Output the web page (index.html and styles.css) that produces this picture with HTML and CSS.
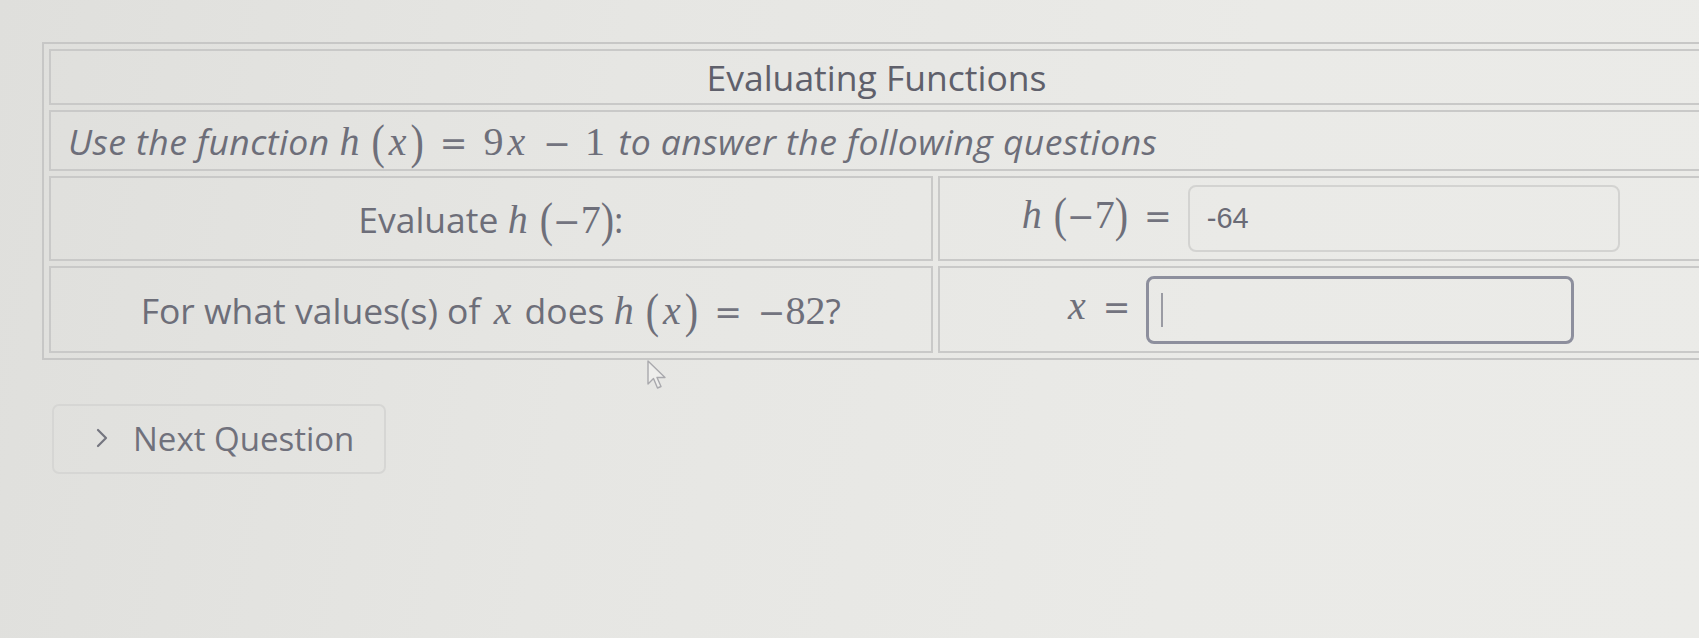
FILE: index.html
```html
<!DOCTYPE html>
<html lang="en">
<head>
<meta charset="utf-8">
<title>Evaluating Functions</title>
<link rel="stylesheet" href="styles.css">
</head>
<body>
<div class="page">
  <table class="qtable">
    <colgroup><col class="col-q"><col class="col-a"></colgroup>
    <tr>
      <th colspan="2" class="title">Evaluating Functions</th>
    </tr>
    <tr>
      <td colspan="2" class="intro">Use the function <span class="math"><i class="fn">h</i><span class="paren">(</span><i class="var">x</i><span class="paren">)</span><span class="op rel">=</span>9<i class="var">x</i><span class="op bin">−</span>1</span> to answer the following questions</td>
    </tr>
    <tr>
      <td class="q">Evaluate <span class="math"><i class="fn">h</i><span class="paren">(</span><span class="op">−</span>7<span class="paren">)</span></span>:</td>
      <td class="a"><span class="math"><i class="fn">h</i><span class="paren">(</span><span class="op">−</span>7<span class="paren">)</span><span class="op rel">=</span></span><span class="field filled">-64</span></td>
    </tr>
    <tr>
      <td class="q">For what values(s) of <span class="math"><i class="var">x</i></span> does <span class="math"><i class="fn">h</i><span class="paren">(</span><i class="var">x</i><span class="paren">)</span><span class="op rel">=</span><span class="op">−</span>82</span>?</td>
      <td class="a"><span class="math"><i class="var solo">x</i><span class="op rel">=</span></span><span class="field focused"><span class="caret"></span></span></td>
    </tr>
  </table>
  <button class="next" type="button"><svg class="chev" width="12" height="20" viewBox="0 0 12 20"><path d="M2 2 L10 10 L2 18" fill="none" stroke="#74757f" stroke-width="2.2" stroke-linecap="round" stroke-linejoin="round"/></svg>Next Question</button>
  <svg class="pointer" width="22" height="32" viewBox="0 0 22 32"><path d="M2 2 L2 25 L7.5 19.5 L11.5 29 L15 27.5 L11 18.5 L19 18.5 Z" fill="#eeeeec" stroke="#a9a9ad" stroke-width="1.4" stroke-linejoin="round"/></svg>
</div>
</body>
</html>
```

FILE: styles.css
```css
html, body {
  margin: 0;
  padding: 0;
  overflow: hidden;
}
body {
  width: 1699px;
  height: 638px;
  background: linear-gradient(100deg, #dfdfdc 0%, #e6e6e3 35%, #eaeae7 70%, #ebebe8 100%);
  font-family: "Open Sans", "Noto Sans", sans-serif;
  color: #6d6e79;
}
.page {
  position: relative;
  padding: 42px 0 0 42px;
}
.qtable {
  table-layout: fixed;
  width: 1669px;
  border-collapse: separate;
  border-spacing: 5px;
  border: 2px solid #c7c7c6;
}
.col-q { width: 883px; }
.col-a { width: 766px; }
.qtable th, .qtable td {
  border: 2px solid #c9c9c8;
  padding: 0;
  vertical-align: middle;
  font-weight: 400;
  font-size: 35.5px;
  white-space: nowrap;
}
.title {
  height: 52px;
  text-align: center;
  color: #5f606b;
}
.intro {
  height: 57px;
  text-align: left;
  padding-left: 17px !important;
  font-style: italic;
  letter-spacing: 0.45px;
}
.q, .a {
  height: 81px;
  text-align: center;
}
.qtable tr:last-child td { height: 83px; }
.math {
  font-family: "Liberation Serif", "Times New Roman", serif;
  font-style: normal;
  font-size: 40px;
  letter-spacing: 0;
  color: #6e6f7a;
}
.math i { font-style: italic; }
.fn { margin-right: 12px; }
.var { margin: 0 4px; }
.var.solo { margin: 0 1px; }
.paren {
  display: inline-block;
  transform: scaleY(1.22);
}
.op {
  font-family: "DejaVu Serif", serif;
  font-size: 33px;
  color: #73747f;
}
.rel { margin: 0 16px; }
.bin { margin: 0 14px; }
.intro .math { margin: 0 4px 0 0; }
.field {
  display: inline-block;
  vertical-align: middle;
  box-sizing: border-box;
  text-align: left;
  font-family: "Liberation Sans", Arial, sans-serif;
  font-size: 29px;
  color: #6a6b76;
  border-radius: 8px;
}
.filled {
  width: 432px;
  height: 67px;
  line-height: 63px;
  padding-left: 17px;
  border: 2px solid #d3d3d1;
  margin-left: 0;
}
.focused {
  width: 428px;
  height: 68px;
  padding-left: 12px;
  border: 3px solid #8d8f9d;
  margin-left: 0;
  display: inline-flex;
  align-items: center;
}
.caret {
  display: block;
  width: 2px;
  height: 34px;
  background: #9a9ba3;
}
.next {
  display: flex;
  align-items: center;
  margin: 44px 0 0 10px;
  width: 334px;
  height: 70px;
  box-sizing: border-box;
  padding: 0 0 2px 42px;
  border: 2px solid #d6d6d4;
  border-radius: 7px;
  background: transparent;
  font-family: "Open Sans", "Noto Sans", sans-serif;
  font-size: 33px;
  color: #70717c;
}
.chev {
  margin-right: 25px;
  flex: none;
}
.pointer {
  position: absolute;
  left: 646px;
  top: 359px;
}
```
